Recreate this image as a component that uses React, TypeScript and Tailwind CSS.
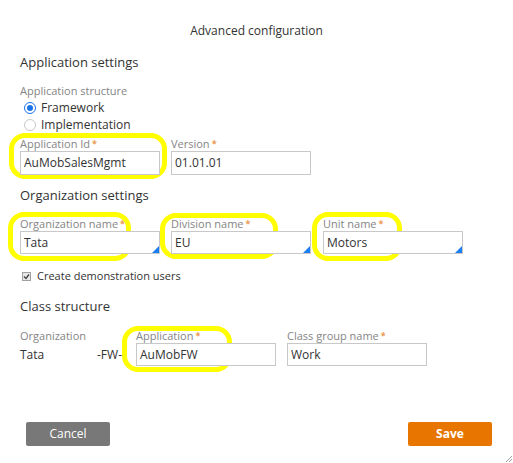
import type { ReactNode } from 'react'

function Req() {
  return <span className="ml-[2px] text-[9px] font-bold text-[#eb9a55] align-top">*</span>
}

function Label({ children, req = true }: { children: ReactNode; req?: boolean }) {
  return (
    <div className="h-[14px] leading-[14px] text-[11px] text-[#858585] whitespace-nowrap">
      {children}
      {req && <Req />}
    </div>
  )
}

function Input({ value, h = 'h-[24px]', corner = false }: { value: string; h?: string; corner?: boolean }) {
  return (
    <div className={`relative ${h} border border-[#c8c8c8] bg-white flex items-center px-[3px] text-[12px] text-[#333]`}>
      {value}
      {corner && (
        <svg className="absolute right-0 bottom-0" width="7" height="7" viewBox="0 0 7 7">
          <polygon points="7,0 7,7 0,7" fill="#1a7ef0" />
        </svg>
      )}
    </div>
  )
}

function Mark({ className }: { className: string }) {
  return <span className={`absolute border-[5px] border-[#ffff00] rounded-[16px] pointer-events-none ${className}`} />
}

export default function App() {
  return (
    <div
      className="relative w-[513px] h-[463px] bg-white text-[#333] overflow-hidden"
      style={{ fontFamily: '"Open Sans", "Noto Sans", sans-serif' }}
    >
      <div className="pt-[23px] h-[39px] text-center text-[12px] leading-[16px]">Advanced configuration</div>

      <div className="pl-[20px]">
        <div className="mt-[15px] h-[16px] leading-[16px] text-[13px]">Application settings</div>
        <div className="mt-[14px]">
          <Label req={false}>Application structure</Label>
        </div>
        <div className="mt-[1px] pl-[4px]">
          <div className="h-[17px] flex items-center gap-[5px] text-[12px]">
            <span className="w-[12px] h-[12px] rounded-full border border-[#1a73e8] flex items-center justify-center">
              <span className="w-[6px] h-[6px] rounded-full bg-[#1a73e8]" />
            </span>
            Framework
          </div>
          <div className="h-[17px] flex items-center gap-[5px] text-[12px]">
            <span className="w-[12px] h-[12px] rounded-full border border-[#c8c8c8]" />
            Implementation
          </div>
        </div>

        <div className="mt-[4px] flex gap-[11px]">
          <div className="relative w-[140px]">
            <Mark className="-left-[11px] -right-[7px] -top-[4px] -bottom-[4px]" />
            <Label>Application Id</Label>
            <Input value="AuMobSalesMgmt" />
          </div>
          <div className="w-[140px]">
            <Label>Version</Label>
            <Input value="01.01.01" />
          </div>
        </div>

        <div className="mt-[12px] h-[16px] leading-[16px] text-[13px]">Organization settings</div>

        <div className="mt-[14px] flex">
          <div className="relative w-[140px]">
            <Mark className="-left-[12px] w-[123px] -top-[5px] h-[49px]" />
            <Label>Organization name</Label>
            <Input value="Tata" h="h-[23px]" corner />
          </div>
          <div className="relative w-[140px] ml-[11px]">
            <Mark className="-left-[11px] w-[118px] -top-[4px] h-[46px]" />
            <Label>Division name</Label>
            <Input value="EU" h="h-[23px]" corner />
          </div>
          <div className="relative w-[140px] ml-[12px]">
            <Mark className="-left-[11px] w-[90px] -top-[5px] h-[49px]" />
            <Label>Unit name</Label>
            <Input value="Motors" h="h-[23px]" corner />
          </div>
        </div>

        <div className="mt-[14px] h-[16px] flex items-center gap-[6px] pl-[2px] text-[11px]">
          <span className="w-[9px] h-[9px] border border-[#a0a0a0] bg-[#e8e8e8] flex items-center justify-center">
            <svg width="7" height="7" viewBox="0 0 7 7">
              <path d="M1 3.5 L3 5.5 L6 1.5" fill="none" stroke="#444" strokeWidth="1.3" />
            </svg>
          </span>
          Create demonstration users
        </div>

        <div className="mt-[14px] h-[16px] leading-[16px] text-[13px]">Class structure</div>

        <div className="mt-[15px] flex">
          <div className="w-[77px]">
            <Label req={false}>Organization</Label>
            <div className="h-[23px] flex items-center text-[12px]">Tata</div>
          </div>
          <div className="w-[39px] pt-[14px]">
            <div className="h-[23px] flex items-center text-[12px]">-FW-</div>
          </div>
          <div className="relative w-[140px]">
            <Mark className="-left-[14px] w-[110px] -top-[3px] h-[46px]" />
            <Label>Application</Label>
            <Input value="AuMobFW" h="h-[23px]" />
          </div>
          <div className="w-[140px] ml-[11px]">
            <Label>Class group name</Label>
            <Input value="Work" h="h-[23px]" />
          </div>
        </div>
      </div>

      <div className="mt-[56px] flex justify-between pl-[26px] pr-[21px]">
        <button className="w-[84px] h-[24px] rounded-[2px] bg-[#787878] text-white text-[12px]">Cancel</button>
        <button className="w-[84px] h-[24px] rounded-[2px] bg-[#e87500] text-white text-[12px] font-bold">Save</button>
      </div>

      <svg className="absolute right-[1px] bottom-[1px]" width="6" height="6" viewBox="0 0 6 6">
        <path d="M0 6 L6 0 M3 6 L6 3" stroke="#888" strokeWidth="0.8" />
      </svg>
    </div>
  )
}
